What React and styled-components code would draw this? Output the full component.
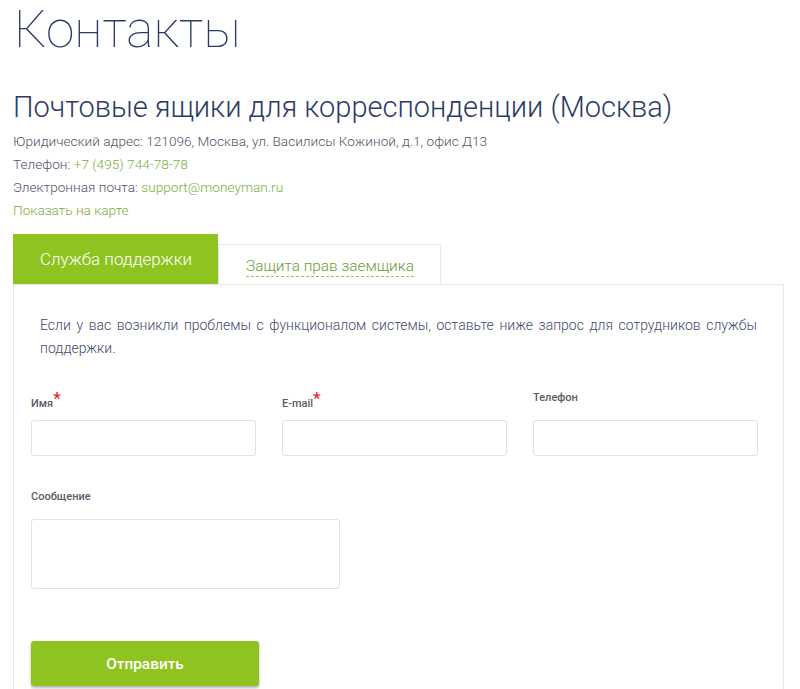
import React from "react";
import styled, { createGlobalStyle } from "styled-components";

const GlobalStyle = createGlobalStyle`
  html, body {
    margin: 0;
    padding: 0;
    background: #fff;
  }
  body {
    font-family: Roboto, "Liberation Sans", Arial, sans-serif;
  }
  * {
    box-sizing: border-box;
  }
`;

const Page = styled.div`
  padding: 0 16px 0 13px;
  width: 800px;
  height: 689px;
  overflow: hidden;
`;

const Title = styled.h1`
  margin: 0;
  font-size: 51.5px;
  line-height: 60px;
  font-weight: 100;
  color: #2b3a67;
  padding-left: 1px;
`;

const Subtitle = styled.h2`
  margin: 29px 0 0;
  font-size: 29px;
  line-height: 36px;
  font-weight: 300;
  color: #2c3a66;
`;

const Info = styled.div`
  margin-top: 5px;
  font-size: 13.65px;
  line-height: 23px;
  font-weight: 300;
  color: #4f5568;
`;

const Line = styled.div``;

const Link = styled.a`
  color: #7fab3e;
  text-decoration: none;
`;

const Tabs = styled.div`
  margin-top: 12px;
  display: flex;
  align-items: flex-end;
`;

const Tab = styled.div`
  height: ${(p) => (p.$active ? 50 : 40)}px;
  padding: 0 26px 0 27px;
  display: flex;
  align-items: center;
  font-size: ${(p) => (p.$active ? 17 : 15.4)}px;
  font-weight: 300;
  background: ${(p) => (p.$active ? "#8fc31f" : "#fff")};
  color: ${(p) => (p.$active ? "#fff" : "#6f9a33")};
  border: ${(p) => (p.$active ? "none" : "1px solid #e8e8e8")};
  border-bottom: none;
  cursor: pointer;
`;

const Dotted = styled.span`
  border-bottom: 1px dashed #9cc35a;
  line-height: 20px;
  padding-top: 3px;
`;

const Panel = styled.div`
  border: 1px solid #e6e6e6;
  padding: 29px 26px 40px 17px;
`;

const Intro = styled.p`
  margin: 0;
  padding-left: 9px;
  font-size: 14px;
  line-height: 23px;
  font-weight: 300;
  text-align: justify;
  color: #3f4a6b;
`;

const Grid = styled.div`
  margin-top: 31px;
  display: grid;
  grid-template-columns: repeat(3, 225px);
  column-gap: 26px;
  row-gap: 34px;
`;

const Field = styled.div`
  display: flex;
  flex-direction: column;
`;

const Label = styled.label`
  display: block;
  height: 29px;
  padding-top: ${(p) => (p.$required ? 6 : 0)}px;
  font-size: 11px;
  line-height: 13px;
  font-weight: 500;
  color: #5b5e66;
`;

const Star = styled.span`
  position: relative;
  top: -3px;
  font-size: 17px;
  line-height: 0;
  color: #e2232f;
`;

const Input = styled.input`
  width: 225px;
  height: 36px;
  border: 1px solid #e2e2e2;
  border-radius: 3px;
  background: #fff;
  outline: none;
`;

const TextArea = styled.textarea`
  width: 309px;
  height: 70px;
  border: 1px solid #e2e2e2;
  border-radius: 3px;
  resize: none;
  outline: none;
  background: #fff;
`;

const Submit = styled.button`
  margin-top: 52px;
  width: 228px;
  height: 45px;
  border: none;
  border-radius: 3px;
  background: #8fc31f;
  color: #fff;
  font-family: Roboto, "Liberation Sans", Arial, sans-serif;
  font-size: 15.4px;
  font-weight: 500;
  box-shadow: 0 2px 3px rgba(0, 0, 0, 0.3);
  cursor: pointer;
`;

export default function App() {
  return (
    <>
      <GlobalStyle />
      <Page>
        <Title>Контакты</Title>
        <Subtitle>Почтовые ящики для корреспонденции (Москва)</Subtitle>
        <Info>
          <Line>Юридический адрес: 121096, Москва, ул. Василисы Кожиной, д.1, офис Д13</Line>
          <Line>
            Телефон: <Link href="#">+7 (495) 744-78-78</Link>
          </Line>
          <Line>
            Электронная почта: <Link href="#">support@moneyman.ru</Link>
          </Line>
          <Line>
            <Link href="#">Показать на карте</Link>
          </Line>
        </Info>
        <Tabs>
          <Tab $active>Служба поддержки</Tab>
          <Tab>
            <Dotted>Защита прав заемщика</Dotted>
          </Tab>
        </Tabs>
        <Panel>
          <Intro>
            Если у вас возникли проблемы с функционалом системы, оставьте ниже запрос для
            сотрудников службы поддержки.
          </Intro>
          <Grid>
            <Field>
              <Label $required>
                Имя<Star>*</Star>
              </Label>
              <Input type="text" />
            </Field>
            <Field>
              <Label $required>
                E-mail<Star>*</Star>
              </Label>
              <Input type="email" />
            </Field>
            <Field>
              <Label>Телефон</Label>
              <Input type="tel" />
            </Field>
            <Field>
              <Label>Сообщение</Label>
              <TextArea />
            </Field>
          </Grid>
          <Submit>Отправить</Submit>
        </Panel>
      </Page>
    </>
  );
}
